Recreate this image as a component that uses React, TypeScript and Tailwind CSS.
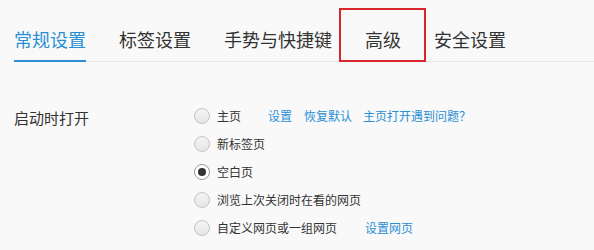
const tabs = ['常规设置', '标签设置', '手势与快捷键', '高级', '安全设置']

interface RadioRowProps {
  label: string
  checked?: boolean
  children?: React.ReactNode
}

function RadioRow({ label, checked = false, children }: RadioRowProps) {
  return (
    <div className="flex items-center h-[28px]">
      <span
        className={`w-[16px] h-[16px] rounded-full border flex items-center justify-center shrink-0 ${
          checked ? 'border-[#9a9a9a] bg-white' : 'border-[#c4c4c4] bg-gradient-to-b from-[#f4f4f4] to-[#e6e6e6]'
        }`}
      >
        {checked && <span className="w-[8px] h-[8px] rounded-full bg-[#333]" />}
      </span>
      <span className="ml-[7px] text-[12px] text-[#333]">{label}</span>
      {children}
    </div>
  )
}

export default function App() {
  return (
    <div
      className="relative w-[594px] h-[250px] bg-[#f9f9f9] overflow-hidden"
      style={{ fontFamily: '"Microsoft YaHei", "Noto Sans CJK SC", sans-serif' }}
    >
      <div className="ml-[14px] flex gap-[33px] border-b border-[#e6e6e6]">
        {tabs.map((t, i) => (
          <div
            key={t}
            className={`h-[62px] -mb-px pt-[18px] flex items-center border-b-2 text-[18px] leading-none ${
              i === 0 ? 'border-[#2a8fd4] text-[#2a8fd4]' : 'border-transparent text-[#333]'
            }`}
          >
            {t}
          </div>
        ))}
      </div>

      {/* highlight box around 高级 */}
      <div className="absolute left-[339px] top-[8px] w-[87px] h-[54px] border-2 border-[#d7262c]" />

      <div className="flex mt-[40px] ml-[14px]">
        <div className="w-[180px] pt-[8px] text-[15px] leading-none text-[#333]">启动时打开</div>
        <div className="flex flex-col">
          <RadioRow label="主页">
            <a className="ml-[27px] text-[12px] text-[#2a8fd4]">设置</a>
            <a className="ml-[12px] text-[12px] text-[#2a8fd4]">恢复默认</a>
            <a className="ml-[11px] text-[12px] text-[#2a8fd4]">主页打开遇到问题？</a>
          </RadioRow>
          <RadioRow label="新标签页" />
          <RadioRow label="空白页" checked />
          <RadioRow label="浏览上次关闭时在看的网页" />
          <RadioRow label="自定义网页或一组网页">
            <a className="ml-[28px] text-[12px] text-[#2a8fd4]">设置网页</a>
          </RadioRow>
        </div>
      </div>
    </div>
  )
}
